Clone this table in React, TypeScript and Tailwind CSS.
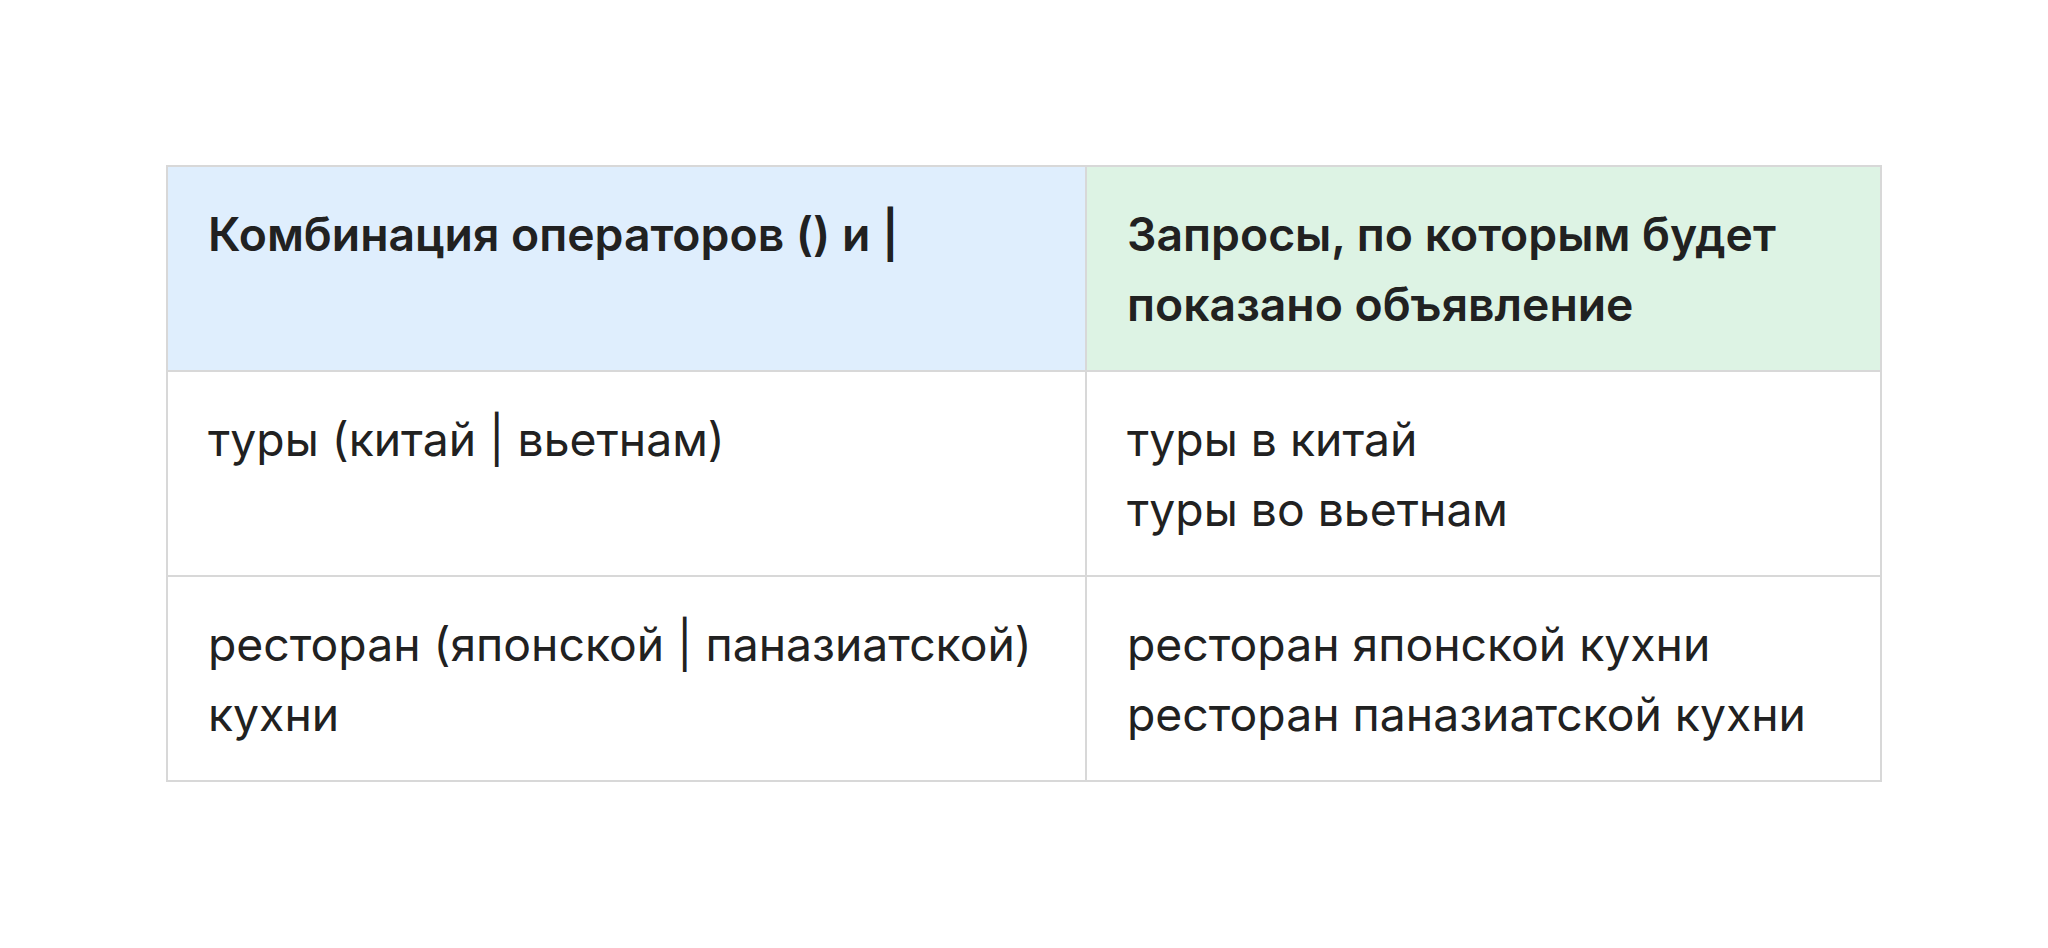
const rows = [
  { query: "туры (китай | вьетнам)", result: ["туры в китай", "туры во вьетнам"] },
  {
    query: "ресторан (японской | паназиатской) кухни",
    result: ["ресторан японской кухни", "ресторан паназиатской кухни"],
  },
]

export default function App() {
  return (
    <div className="min-h-screen bg-white pt-[165px] font-['Inter','Liberation_Sans',sans-serif] text-[#212121]">
      <table className="mx-auto w-[1716px] table-fixed border-collapse text-[46.3px] leading-[70px]">
        <colgroup>
          <col className="w-[919px]" />
          <col />
        </colgroup>
        <thead>
          <tr className="text-left align-top">
            <th className="border-2 border-[#d8d8d8] bg-[#dfeefd] px-10 pt-8 pb-[31px] font-semibold">
              Комбинация операторов () и |
            </th>
            <th className="border-2 border-[#d8d8d8] bg-[#ddf3e4] px-10 pt-8 pb-[31px] font-semibold">
              Запросы, по которым будет показано объявление
            </th>
          </tr>
        </thead>
        <tbody>
          {rows.map((row) => (
            <tr key={row.query} className="align-top">
              <td className="border-2 border-[#d8d8d8] px-10 pt-8 pb-[31px]">{row.query}</td>
              <td className="border-2 border-[#d8d8d8] px-10 pt-8 pb-[31px]">
                {row.result.map((line) => (
                  <div key={line}>{line}</div>
                ))}
              </td>
            </tr>
          ))}
        </tbody>
      </table>
    </div>
  )
}
